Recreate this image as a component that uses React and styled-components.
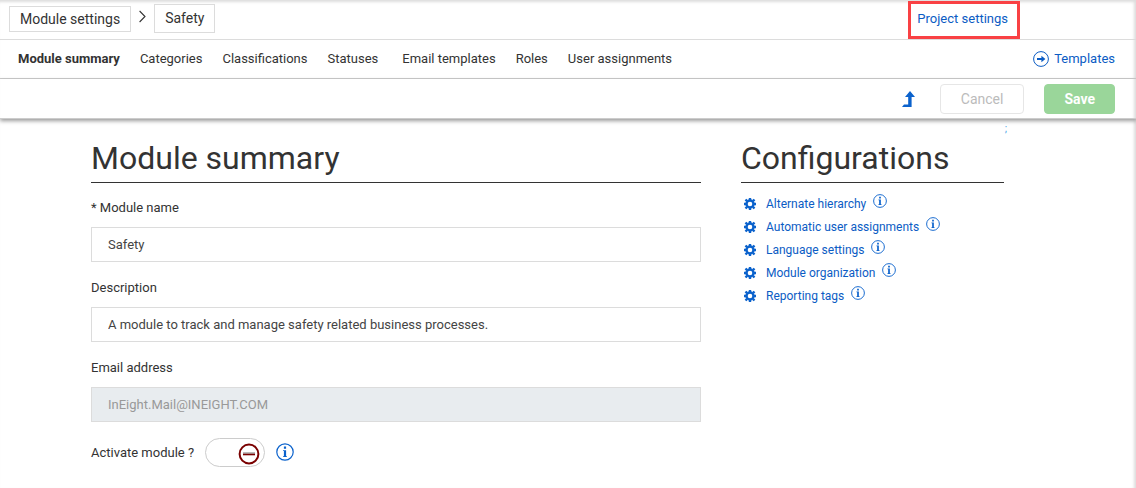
import React, { useState } from 'react';
import styled, { createGlobalStyle } from 'styled-components';

const GlobalStyle = createGlobalStyle`
  * {
    box-sizing: border-box;
  }

  body {
    margin: 0;
    background: #fff;
    color: #333;
    font: 13px/20px Roboto, "Liberation Sans", sans-serif;
  }

  a {
    color: #0b5cc4;
    text-decoration: none;
  }
`;

const Page = styled.div`
  min-height: 100vh;
  box-shadow: inset -2px 2px 3px #ddd;
`;

const Header = styled.header`
  display: flex;
  align-items: flex-start;
  justify-content: space-between;
  height: 40px;
  padding-right: 116px;
  border-bottom: 1px solid #dcdcdc;
`;

const Breadcrumb = styled.nav`
  display: flex;
  align-items: center;
  gap: 8px;
  padding: 4px 0 0 9px;

  svg {
    margin-bottom: 4px;
  }
`;

const Crumb = styled.a`
  padding: ${props => (props.$current ? '3px 10px 4px' : '2px 10px')};
  border: 1px solid #dcdcdc;
  background: #fff;
  color: #333;
  font-size: 14px;
`;

const ProjectLink = styled.a`
  height: 38px;
  margin-top: 1px;
  padding: 5px 9px 5px 6px;
  border: 3px solid #f94144;
  background: #fff;
`;

const Tabs = styled.nav`
  display: flex;
  align-items: center;
  gap: 24px;
  height: 39px;
  padding: 0 21px 0 18px;
  border-bottom: 1px solid #ccc;
`;

const TabGroup = styled.div`
  display: flex;
  gap: 20px;
`;

const Tab = styled.a`
  color: #333;
  font-weight: ${props => (props.$active ? 700 : 400)};
`;

const TemplatesLink = styled.a`
  display: flex;
  align-items: center;
  gap: 5px;
  margin-left: auto;
`;

const Toolbar = styled.div`
  display: flex;
  align-items: center;
  justify-content: flex-end;
  height: 40px;
  padding-right: 21px;
  border-bottom: 1px solid #ccc;
  box-shadow: 0 2px 4px rgba(0, 0, 0, 0.4);
`;

const IconButton = styled.button`
  display: flex;
  margin-right: 25px;
  padding: 0;
  border: 0;
  background: none;
`;

const Button = styled.button`
  height: 30px;
  padding: 0 ${props => (props.$primary ? 19 : 20)}px;
  border: 1px solid ${props => (props.$primary ? '#9ad69a' : '#e6e6e6')};
  border-radius: 4px;
  background: ${props => (props.$primary ? '#9ad69a' : '#fff')};
  color: ${props => (props.$primary ? '#fff' : '#bbb')};
  font: ${props => (props.$primary ? 700 : 400)} 14px Roboto, sans-serif;

  & + & {
    margin-left: 20px;
  }
`;

const Stray = styled.div`
  height: 17px;
  padding-right: 129px;
  color: #4fa8e8;
  font-size: 11px;
  text-align: right;
`;

const Content = styled.div`
  display: grid;
  grid-template-columns: 610fr 263fr;
  gap: 40px;
  padding: 0 132px 20px 91px;
`;

const Title = styled.h2`
  margin: 0;
  padding: 4px 0 5px;
  border-bottom: 1px solid #333;
  font-size: 32px;
  font-weight: 400;
  line-height: 37px;
`;

const Field = styled.div`
  display: flex;
  flex-direction: column;
  gap: 9px;
  margin-top: 15px;

  & + & {
    margin-top: 16px;
  }
`;

const Input = styled.input`
  width: 100%;
  height: 35px;
  padding: 0 16px;
  border: 1px solid #dcdcdc;
  border-radius: 0;
  background: #fff;
  color: #444;
  font: 13px Roboto, sans-serif;

  &:disabled {
    background: #e8ecef;
    color: #999;
  }
`;

const ActivateRow = styled.div`
  display: flex;
  align-items: center;
  gap: 11px;
  margin-top: 16px;
`;

const Switch = styled.span`
  position: relative;
  display: flex;
  align-items: center;
  justify-content: ${props => (props.$on ? 'flex-start' : 'flex-end')};
  width: 60px;
  height: 29px;
  padding: 3px 4px 0;
  border: 1px solid #ccc;
  border-radius: 15px;

  input {
    position: absolute;
    inset: 0;
    width: 100%;
    height: 100%;
    margin: 0;
    opacity: 0;
  }
`;

const ConfigList = styled.ul`
  margin: 9px 0 0;
  padding: 0 0 0 3px;
  list-style: none;
`;

const ConfigItem = styled.li`
  display: flex;
  align-items: center;
  height: 23px;
  font-size: 12px;

  a {
    margin: 0 7px 0 10px;
  }
`;

const InfoButton = styled.button`
  display: flex;
  padding: 0 0 ${props => (props.$raised ? 5 : 2)}px;
  border: 0;
  background: none;
`;

const ChevronIcon = () => (
  <svg width="7" height="13" viewBox="0 0 7 13" fill="none" stroke="#333" strokeWidth="1.1">
    <path d="M.6 1 6 6.5.6 12" />
  </svg>
);

const ArrowCircleIcon = () => (
  <svg width="16" height="16" viewBox="0 0 16 16">
    <circle cx="8" cy="8" r="7.4" fill="none" stroke="#0b5cc4" />
    <path d="M4 7h4.4V4.8L12.4 8l-4 3.2V9H4z" fill="#0b5cc4" />
  </svg>
);

const LevelUpIcon = () => (
  <svg width="13" height="16" viewBox="0 0 13 16" fill="#0b62cc">
    <path d="M8 0l5 6h-3.4v10H0l2-2.4h4.2V6H3z" />
  </svg>
);

const GearIcon = () => (
  <svg width="12" height="12" viewBox="0 0 12 12" fill="none" stroke="#0b62cc">
    <circle cx="6" cy="6" r="3.5" strokeWidth="2.4" />
    <path
      d="M6 0v2M6 10v2M0 6h2M10 6h2M1.5 1.5l1.6 1.6M8.9 8.9l1.6 1.6M10.5 1.5 8.9 3.1M3.1 8.9l-1.6 1.6"
      strokeWidth="2.4"
    />
  </svg>
);

const InfoIcon = ({ size }) => (
  <svg width={size} height={size} viewBox="0 0 18 18">
    <circle cx="9" cy="9" r="8.2" fill="none" stroke="#0b62cc" strokeWidth="1.2" />
    <path d="M7.9 3.6h2.2v2.1H7.9zM7 7.2h3.1v6H11V14H7v-.8h.9V8H7z" fill="#0b62cc" />
  </svg>
);

const MinusIcon = () => (
  <svg width="22" height="22" viewBox="0 0 22 22" fill="none">
    <circle cx="11" cy="11" r="9.4" stroke="#7a0000" strokeWidth="2" />
    <path d="M5 10h12" stroke="#bbb" strokeWidth="2" />
    <path d="M5 11.5h12" stroke="#7a0000" strokeWidth="1.6" />
  </svg>
);

const tabGroups = [
  ['Module summary', 'Categories', 'Classifications', 'Statuses'],
  ['Email templates', 'Roles', 'User assignments'],
];

const configurations = [
  'Alternate hierarchy',
  'Automatic user assignments',
  'Language settings',
  'Module organization',
  'Reporting tags',
];

const App = () => {
  const [active, setActive] = useState(false);

  return (
    <Page>
      <GlobalStyle />
      <Header>
        <Breadcrumb>
          <Crumb href="#settings">Module settings</Crumb>
          <ChevronIcon />
          <Crumb href="#safety" $current>Safety</Crumb>
        </Breadcrumb>
        <ProjectLink href="#project">Project settings</ProjectLink>
      </Header>
      <Tabs>
        {tabGroups.map(group => (
          <TabGroup key={group[0]}>
            {group.map(tab => (
              <Tab key={tab} href="#tab" $active={tab === 'Module summary'}>{tab}</Tab>
            ))}
          </TabGroup>
        ))}
        <TemplatesLink href="#templates">
          <ArrowCircleIcon />
          Templates
        </TemplatesLink>
      </Tabs>
      <Toolbar>
        <IconButton type="button" aria-label="Up one level"><LevelUpIcon /></IconButton>
        <Button type="button">Cancel</Button>
        <Button type="button" $primary>Save</Button>
      </Toolbar>
      <Stray>;</Stray>
      <Content>
        <main>
          <Title>Module summary</Title>
          <Field>
            <label htmlFor="name">* Module name</label>
            <Input id="name" defaultValue="Safety" />
          </Field>
          <Field>
            <label htmlFor="description">Description</label>
            <Input
              id="description"
              defaultValue="A module to track and manage safety related business processes."
            />
          </Field>
          <Field>
            <label htmlFor="email">Email address</label>
            <Input id="email" defaultValue="InEight.Mail@INEIGHT.COM" disabled />
          </Field>
          <ActivateRow>
            <label htmlFor="activate">Activate module ?</label>
            <Switch $on={active}>
              <MinusIcon />
              <input
                id="activate"
                type="checkbox"
                checked={active}
                onChange={e => setActive(e.target.checked)}
              />
            </Switch>
            <InfoButton type="button" aria-label="About activation"><InfoIcon size={18} /></InfoButton>
          </ActivateRow>
        </main>
        <aside>
          <Title>Configurations</Title>
          <ConfigList>
            {configurations.map(item => (
              <ConfigItem key={item}>
                <GearIcon />
                <a href="#config">{item}</a>
                <InfoButton type="button" $raised aria-label={`About ${item}`}>
                  <InfoIcon size={14} />
                </InfoButton>
              </ConfigItem>
            ))}
          </ConfigList>
        </aside>
      </Content>
    </Page>
  );
};

export default App;
